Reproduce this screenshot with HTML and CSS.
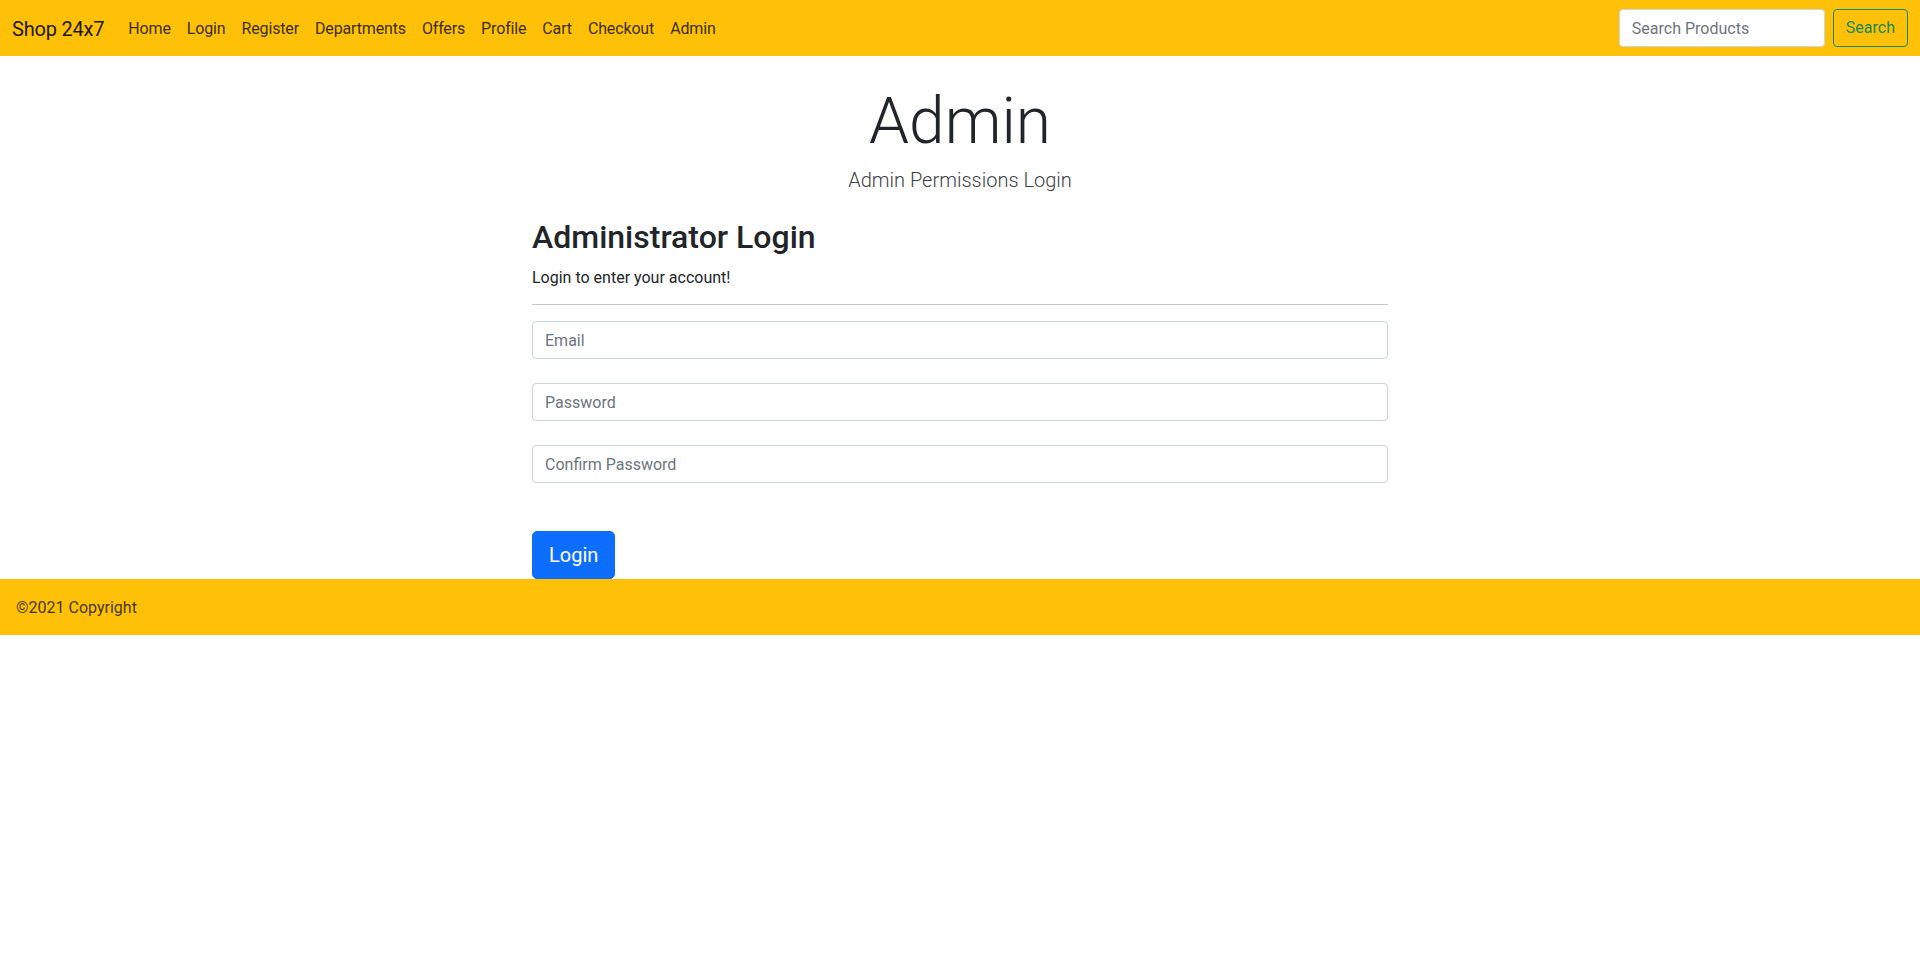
FILE: index.html
```html
<!DOCTYPE html>
<html lang="en">
<head>
<meta charset="utf-8">
<title>Shop 24x7 - Admin</title>
<link rel="stylesheet" href="styles.css">
</head>
<body>
<nav class="navbar">
  <div class="navbar-left">
    <a class="brand" href="#">Shop 24x7</a>
    <ul class="nav-links">
      <li><a href="#">Home</a></li>
      <li><a href="#">Login</a></li>
      <li><a href="#">Register</a></li>
      <li><a href="#">Departments</a></li>
      <li><a href="#">Offers</a></li>
      <li><a href="#">Profile</a></li>
      <li><a href="#">Cart</a></li>
      <li><a href="#">Checkout</a></li>
      <li><a href="#">Admin</a></li>
    </ul>
  </div>
  <form class="search-form">
    <input class="search-input" type="search" placeholder="Search Products">
    <button class="search-btn" type="button">Search</button>
  </form>
</nav>

<main class="main">
  <header class="page-header">
    <h1 class="display-title">Admin</h1>
    <p class="lead">Admin Permissions Login</p>
  </header>

  <section class="form-col">
    <h2 class="form-title">Administrator Login</h2>
    <p class="form-sub">Login to enter your account!</p>
    <hr class="divider">
    <form class="login-form">
      <input class="form-control" type="email" placeholder="Email">
      <input class="form-control" type="password" placeholder="Password">
      <input class="form-control" type="password" placeholder="Confirm Password">
      <button class="btn-login" type="button">Login</button>
    </form>
  </section>
</main>

<footer class="footer">©2021 Copyright</footer>
</body>
</html>
```
FILE: styles.css
```css
* { box-sizing: border-box; }

body {
  margin: 0;
  font-family: Roboto, "Liberation Sans", sans-serif;
  font-size: 16px;
  line-height: 1.5;
  color: #212529;
  background: #fff;
}

a { text-decoration: none; }

/* Navbar */
.navbar {
  display: flex;
  align-items: center;
  justify-content: space-between;
  height: 56px;
  padding: 8px 12px;
  background: #ffc107;
}
.navbar-left {
  display: flex;
  align-items: center;
}
.brand {
  font-size: 20px;
  line-height: 30px;
  padding: 6px 0 4px;
  margin-right: 16px;
  letter-spacing: -0.2px;
  color: rgba(0, 0, 0, 0.9);
}
.nav-links {
  display: flex;
  list-style: none;
  margin: 0;
  padding: 0;
}
.nav-links a {
  display: block;
  padding: 9px 8px 7px;
  line-height: 24px;
  letter-spacing: -0.15px;
  color: rgba(0, 0, 0, 0.8);
}
.search-form {
  display: flex;
  align-items: center;
  gap: 8px;
}
.search-input {
  width: 206px;
  height: 38px;
  padding: 6px 12px;
  font: inherit;
  font-size: 16px;
  color: #212529;
  background: #fff;
  border: 1px solid #ced4da;
  border-radius: 4px;
}
.search-input::placeholder { color: #6c757d; }
.search-btn {
  height: 38px;
  padding: 6px 12px;
  font: inherit;
  font-size: 16px;
  color: #198754;
  background: transparent;
  border: 1px solid #198754;
  border-radius: 4px;
}

/* Main */
.main {
  padding-top: 28px;
}
.page-header {
  text-align: center;
}
.display-title {
  margin: 0;
  font-size: 64px;
  font-weight: 300;
  line-height: 1.2;
}
.lead {
  margin: 4px 0 0;
  font-size: 20px;
  font-weight: 300;
  line-height: 30px;
  color: #3d4146;
}

.form-col {
  max-width: 856px;
  margin: 23px auto 0;
}
.form-title {
  margin: 0 0 10px;
  font-size: 32px;
  font-weight: 500;
  line-height: 1.2;
}
.form-sub {
  margin: 0;
  line-height: 24px;
}
.divider {
  margin: 14px 0 16px;
  border: 0;
  border-top: 1px solid #c8c9ca;
  height: 0;
}
.login-form {
  display: flex;
  flex-direction: column;
  align-items: flex-start;
}
.form-control {
  width: 100%;
  height: 38px;
  margin-bottom: 24px;
  padding: 6px 12px;
  font: inherit;
  font-size: 16px;
  color: #212529;
  border: 1px solid #ced4da;
  border-radius: 4px;
  background: #fff;
}
.form-control::placeholder { color: #6c757d; }
.btn-login {
  margin-top: 24px;
  height: 48px;
  padding: 8px 16px;
  font: inherit;
  font-size: 20px;
  line-height: 30px;
  color: #fff;
  background: #0d6efd;
  border: 1px solid #0d6efd;
  border-radius: 5px;
}

/* Footer */
.footer {
  padding: 17px 16px 15px;
  line-height: 24px;
  background: #ffc107;
  color: rgba(0, 0, 0, 0.75);
}
```
